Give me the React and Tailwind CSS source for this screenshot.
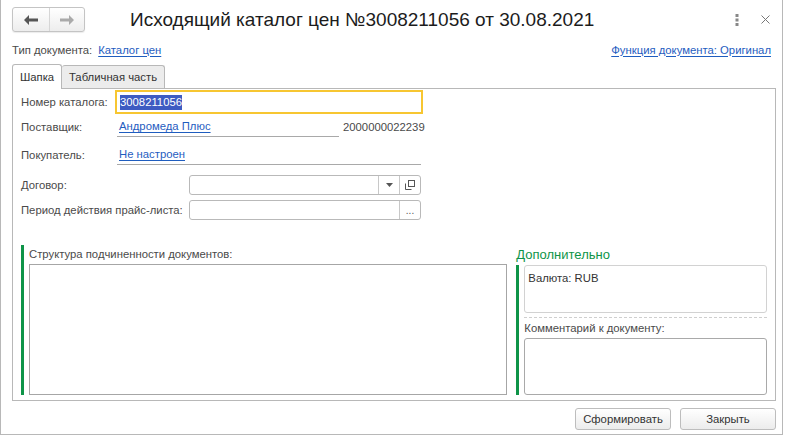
import { useState } from "react";

const font = { fontFamily: '"Liberation Sans", Arial, sans-serif' };

function NavButtons() {
  return (
    <div className="flex h-[25px] w-[73px] rounded-[3px] border border-[#c4c4c4] bg-gradient-to-b from-white to-[#ededed] shadow-[0_1px_1px_rgba(0,0,0,0.08)]">
      <button className="flex w-[37px] items-center justify-center border-r border-[#d6d6d6]">
        <svg width="14" height="10" viewBox="0 0 14 10">
          <path d="M0 5 L5 0 L5 3.5 L14 3.5 L14 6.5 L5 6.5 L5 10 Z" fill="#555" />
        </svg>
      </button>
      <button className="flex flex-1 items-center justify-center">
        <svg width="14" height="10" viewBox="0 0 14 10">
          <path d="M14 5 L9 0 L9 3.5 L0 3.5 L0 6.5 L9 6.5 L9 10 Z" fill="#aaa" />
        </svg>
      </button>
    </div>
  );
}

function Link({ children, className = "" }) {
  return <span className={`text-[#1f5dbf] underline underline-offset-2 ${className}`}>{children}</span>;
}

function Field({ label, labelWidth, children, className = "" }) {
  return (
    <div className={`flex items-center ${className}`}>
      <div className="shrink-0 whitespace-nowrap text-[#4a4a4a]" style={{ width: labelWidth }}>
        {label}
      </div>
      {children}
    </div>
  );
}

export default function App() {
  const [tab, setTab] = useState("head");

  return (
    <div className="h-[438px] w-[787px] whitespace-nowrap bg-white text-[11.3px]" style={font}>
      <div className="flex h-[435px] w-[783px] flex-col border border-t-0 border-[#b8b8b8]">
        <header className="flex h-[38px] items-center pl-[11px] pr-[12px] pt-[1px]">
          <NavButtons />
          <h1 className="ml-[45px] text-[19px] leading-none text-[#1c1c1c]">
            Исходящий каталог цен №3008211056 от 30.08.2021
          </h1>
          <div className="ml-auto flex items-center gap-[22px] text-[#777]">
            <svg width="4" height="12" viewBox="0 0 4 12">
              <rect x="0.5" y="0" width="3" height="3" fill="#888" />
              <rect x="0.5" y="4.5" width="3" height="3" fill="#888" />
              <rect x="0.5" y="9" width="3" height="3" fill="#888" />
            </svg>
            <svg width="9" height="9" viewBox="0 0 9 9">
              <path d="M0.5 0.5 L8.5 8.5 M8.5 0.5 L0.5 8.5" stroke="#777" strokeWidth="1" />
            </svg>
          </div>
        </header>

        <div className="flex h-[22px] items-center pl-[11px] pr-[11px] pt-[2px]">
          <span className="text-[#4a4a4a]">Тип документа:</span>
          <Link className="ml-[6px]">Каталог цен</Link>
          <Link className="ml-auto">Функция документа: Оригинал</Link>
        </div>

        <div className="mt-[4px] flex h-[24px] items-end pl-[11px]">
          <button
            onClick={() => setTab("head")}
            className={`w-[50px] rounded-t-[3px] border border-b-0 border-[#b8b8b8] text-[#333] ${
              tab === "head" ? "relative z-10 -mb-px h-[25px] bg-white" : "h-[23px] bg-[#ececec]"
            }`}
          >
            Шапка
          </button>
          <button
            onClick={() => setTab("table")}
            className={`w-[103px] rounded-t-[3px] border border-b-0 border-l-0 border-[#b8b8b8] text-[#333] ${
              tab === "table" ? "relative z-10 -mb-px h-[25px] bg-white" : "h-[23px] bg-[#ececec]"
            }`}
          >
            Табличная часть
          </button>
        </div>

        <section className="ml-[11px] mr-[6px] flex h-[313px] flex-col border border-[#b8b8b8] pl-[8px] pr-[8px]">
          <Field label="Номер каталога:" labelWidth={94} className="mt-[1px] h-[24px]">
            <div className="flex h-[24px] w-[308px] items-center border-2 border-[#f7c631] pl-[3px]">
              <span className="bg-[#3d5bc2] leading-[15px] text-white">3008211056</span>
            </div>
          </Field>

          <Field label="Поставщик:" labelWidth={96} className="mt-[3px] h-[20px]">
            <div className="flex h-[20px] w-[222px] items-center border-b border-[#a9a9a9] pl-[2px]">
              <Link>Андромеда Плюс</Link>
            </div>
            <span className="ml-[4px] text-[#4a4a4a]">2000000022239</span>
          </Field>

          <Field label="Покупатель:" labelWidth={96} className="mt-[8px] h-[20px]">
            <div className="flex h-[20px] w-[304px] items-center border-b border-[#a9a9a9] pl-[2px]">
              <Link>Не настроен</Link>
            </div>
          </Field>

          <Field label="Договор:" labelWidth={168} className="mt-[10px] h-[20px]">
            <div className="flex h-[20px] w-[232px] rounded-[3px] border border-[#b9b9b9]">
              <div className="flex-1" />
              <div className="flex w-[21px] items-center justify-center border-l border-[#c8c8c8]">
                <svg width="7" height="4" viewBox="0 0 7 4">
                  <path d="M0 0 L7 0 L3.5 4 Z" fill="#555" />
                </svg>
              </div>
              <div className="flex w-[21px] items-center justify-center border-l border-[#c8c8c8]">
                <svg width="10" height="10" viewBox="0 0 10 10">
                  <rect x="3.5" y="0.5" width="6" height="6" fill="none" stroke="#555" />
                  <path d="M0.5 3.5 V9.5 H6.5" fill="none" stroke="#555" />
                </svg>
              </div>
            </div>
          </Field>

          <Field label="Период действия прайс-листа:" labelWidth={168} className="mt-[5px] h-[20px]">
            <div className="flex h-[20px] w-[232px] rounded-[3px] border border-[#b9b9b9]">
              <div className="flex-1" />
              <div className="flex w-[21px] items-end justify-center border-l border-[#c8c8c8] pb-[3px] text-[10px] leading-none text-[#555]">
                ...
              </div>
            </div>
          </Field>

          <div className="mt-[25px] flex flex-1 gap-[9px] pb-[5px]">
            <div className="flex w-[487px] flex-col border-l-[3px] border-[#0e9448] pl-[5px]">
              <div className="h-[19px] pt-[1px] text-[#4a4a4a]">Структура подчиненности документов:</div>
              <div className="flex-1 border border-[#a6a6a6]" />
            </div>

            <div className="flex w-[251px] flex-col">
              <div className="h-[20px] pt-[2px] text-[13px] leading-[16px] text-[#0e9448]">Дополнительно</div>
              <div className="flex flex-1 flex-col border-l-[3px] border-[#0e9448] pl-[5px]">
                <div className="h-[48px] rounded-[3px] border border-[#d2d2d2] px-[3px] pt-[4px] text-[#333]">
                  Валюта: RUB
                </div>
                <div className="mt-[4px] border-t border-dashed border-[#cfcfcf]" />
                <div className="mt-[2px] h-[18px] text-[#4a4a4a]">Комментарий к документу:</div>
                <div className="flex-1 rounded-[3px] border border-[#a9a9a9]" />
              </div>
            </div>
          </div>
        </section>

        <footer className="flex flex-1 items-start justify-end gap-[9px] pr-[6px] pt-[7px]">
          <button className="h-[22px] w-[96px] rounded-[3px] border border-[#bdbdbd] bg-gradient-to-b from-white to-[#ececec] text-[#333]">
            Сформировать
          </button>
          <button className="h-[22px] w-[96px] rounded-[3px] border border-[#bdbdbd] bg-gradient-to-b from-white to-[#ececec] text-[#333]">
            Закрыть
          </button>
        </footer>
      </div>
    </div>
  );
}
